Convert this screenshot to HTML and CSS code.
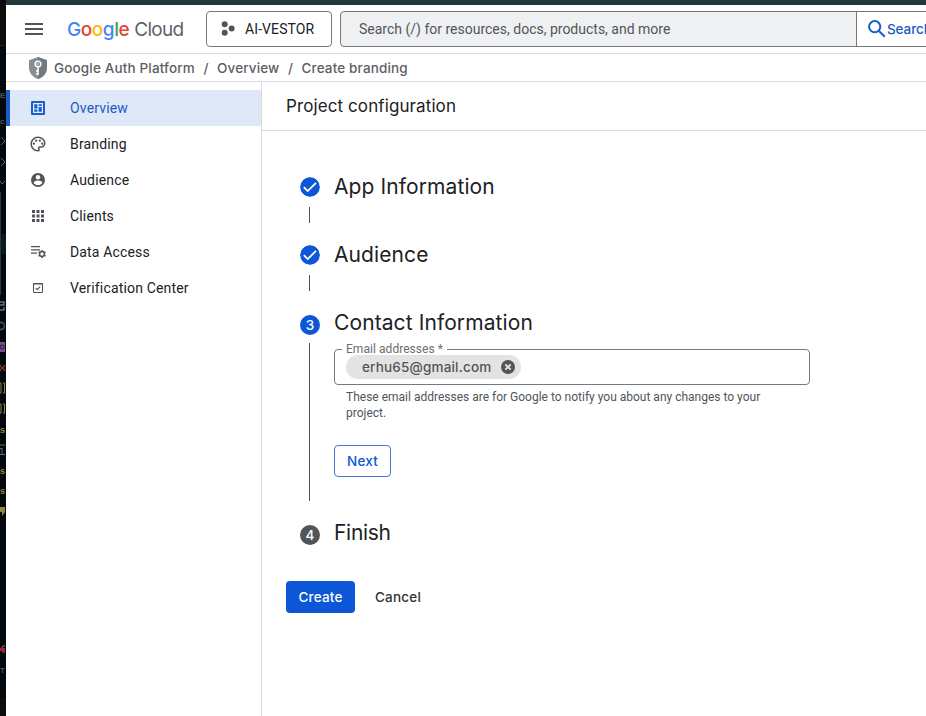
FILE: index.html
```html
<!DOCTYPE html>
<html lang="en">
<head>
<meta charset="utf-8">
<title>Create branding – Google Auth Platform</title>
<link rel="stylesheet" href="styles.css">
</head>
<body>
<div class="screen">
  <svg class="backdrop" width="6" height="716" viewBox="0 0 6 716" aria-hidden="true">
    <path fill="#0c0c0c" d="M0 0h6v45H0z"/>
    <path fill="#20252a" d="M0 45h5v1H0z"/>
    <path fill="#071a25" d="M0 234h6v20H0z"/>
    <path fill="#30353a" d="M0 192h1v103H0z"/>
    <g class="dim-text">
      <text x="0" y="98">E</text><text x="0" y="124">c</text>
      <text x="0" y="673">T</text>
    </g>
    <path fill="none" stroke="#59616a" d="M1 137l4 4-4 4M1 158l4 4-4 4M0 181l2 3 3-3"/>
    <path fill="none" stroke="#687071" stroke-width="1.500" d="M0 302h4v3H0M0 310h4v-3"/>
    <circle cx="1" cy="326" r="3.500" fill="none" stroke="#4a555c" stroke-width="1.500"/>
    <path fill="#7b4a8f" d="M0 342h5v10H0z"/><circle cx="2" cy="347" r="2" fill="none" stroke="#251730"/>
    <path fill="none" stroke="#8a3e1d" stroke-width="1.300" d="M0 365l2 3-2 3M5 365l-2 3 2 3"/>
    <path fill="none" stroke="#89883c" d="M0 383h1v10H0M3 383h1.500v10H3M0 404h1v9H0M3 404h1.500v9H3"/>
    <g class="file-text"><text x="0" y="433">s</text><text x="0" y="474">s</text><text x="0" y="494">s</text></g>
    <path fill="none" stroke="#51717f" d="M0 445h5M2 448v6M0 454.500h5M0 448.500h2"/>
    <path fill="#89883c" d="M0 507h5v5l-3 4v-4H0z"/>
    <path fill="none" stroke="#50565a" stroke-width="1.500" d="M5 646H3l-1 2v2l1 2h2"/>
    <path fill="#c4122f" d="M0 648h5v3H0z"/>
    <path fill="#0c0c0c" d="M0 698h6v18H0z"/>
  </svg>
  <div class="window">
    <header class="topbar">
      <svg class="menu" width="18" height="12" viewBox="0 0 18 12"><path fill="#50555a" d="M0 0h18v2H0zM0 5h18v2H0zM0 10h18v2H0z"/></svg>
      <div class="brand"><span class="google"><b class="g-blue">G</b><b class="g-red">o</b><b class="g-yellow">o</b><b class="g-blue">g</b><b class="g-green">l</b><b class="g-red">e</b></span><span class="cloud">Cloud</span></div>
      <button class="project">
        <svg width="14" height="16" viewBox="0 0 14 16" fill="#50555a"><circle cx="3.700" cy="3.300" r="3"/><circle cx="10.600" cy="7.600" r="3"/><circle cx="3.700" cy="11.700" r="3"/></svg>
        <span>AI-VESTOR</span>
      </button>
      <div class="search">
        <span class="search-hint">Search (/) for resources, docs, products, and more</span>
        <button class="search-button">
          <svg width="18" height="18" viewBox="0 0 18 18" fill="none" stroke="#1a5cc8" stroke-width="2"><circle cx="6.700" cy="6.700" r="5.600"/><path d="M10.800 10.800l6 6"/></svg>
          <span>Search</span>
        </button>
      </div>
    </header>
    <nav class="crumbs">
      <svg width="18" height="22" viewBox="0 0 18 22"><path fill="#878f95" d="M9 0l9 3.300v7.200c0 5.400-3.700 9.800-9 11.500-5.300-1.700-9-6.100-9-11.500V3.300z"/><path fill="#737b82" d="M9 0l9 3.300v7.200c0 5.400-3.700 9.800-9 11.500z"/><circle cx="9" cy="7" r="2.800" fill="none" stroke="#fff" stroke-width="1.500"/><circle cx="9" cy="7" r=".8" fill="#fff"/><path fill="#fff" d="M8.300 9.500h1.500V18H7.200v-2h1.100v-1H7.200v-2h1.100z"/></svg>
      <span>Google Auth Platform</span><i>/</i><span>Overview</span><i>/</i><span>Create branding</span>
    </nav>
    <div class="body">
      <aside class="sidebar">
        <a class="item active"><svg width="18" height="18" viewBox="0 0 18 18"><rect x="2" y="2" width="14" height="14" rx="1.300" fill="#1a5cc8"/><path fill="none" stroke="#e6eefb" stroke-width="1.200" d="M4.600 4.600h8.800v8.800H4.600zM9 4.500v9M4.500 10H9M9 7.500h4.500"/></svg><span>Overview</span></a>
        <a class="item"><svg width="18" height="18" viewBox="0 0 24 24" fill="#50555a"><path d="M12 22C6.490 22 2 17.510 2 12S6.490 2 12 2s10 4.040 10 9c0 3.310-2.690 6-6 6h-1.770c-.280 0-.500.220-.500.500 0 .120.050.230.130.330.410.470.640 1.060.640 1.670A2.500 2.500 0 0 1 12 22zm0-18c-4.410 0-8 3.590-8 8s3.590 8 8 8c.280 0 .500-.220.500-.500a.54.54 0 0 0-.140-.350c-.410-.460-.630-1.050-.630-1.650a2.500 2.500 0 0 1 2.500-2.500H16c2.210 0 4-1.790 4-4 0-3.860-3.590-7-8-7z"/><circle cx="6.500" cy="11.500" r="1.500"/><circle cx="9.500" cy="7.500" r="1.500"/><circle cx="14.500" cy="7.500" r="1.500"/><circle cx="17.500" cy="11.500" r="1.500"/></svg><span>Branding</span></a>
        <a class="item"><svg width="18" height="18" viewBox="0 0 18 18"><circle cx="9" cy="9" r="7" fill="#50555a"/><circle cx="9" cy="6.300" r="2.200" fill="#fff"/><path fill="#fff" d="M4.700 12c0-1.600 2.500-2.400 4.300-2.400s4.300.8 4.300 2.400C12.400 13.400 10.800 14.200 9 14.200S5.600 13.400 4.700 12z"/></svg><span>Audience</span></a>
        <a class="item"><svg width="18" height="18" viewBox="0 0 18 18" fill="#50555a"><path d="M3 3h3v3H3zM7.500 3h3v3h-3zM12 3h3v3h-3zM3 7.500h3v3H3zM7.500 7.500h3v3h-3zM12 7.500h3v3h-3zM3 12h3v3H3zM7.500 12h3v3h-3zM12 12h3v3h-3z"/></svg><span>Clients</span></a>
        <a class="item"><svg width="18" height="18" viewBox="0 0 18 18"><path fill="#50555a" d="M2 3h9v1.300H2zM2 6.200h9v1.300H2zM2 9.400h6v1.300H2z"/><circle cx="13" cy="11" r="2.400" fill="none" stroke="#50555a" stroke-width="1.500"/><path fill="none" stroke="#50555a" stroke-width="1.500" d="M13 6.900v1.500M13 13.600v1.500M9.450 8.950l1.300.75M15.250 12.300l1.300.75M9.450 13.050l1.300-.75M15.250 9.700l1.300-.75"/></svg><span>Data Access</span></a>
        <a class="item"><svg width="18" height="18" viewBox="0 0 18 18" fill="none" stroke="#50555a"><rect x="4.500" y="4.500" width="9" height="9" rx=".7" stroke-width="1.100"/><path stroke-width="1.200" d="M4 5h10M6.700 9.200l1.500 1.500 3-3.100"/></svg><span>Verification Center</span></a>
      </aside>
      <main>
        <h1>Project configuration</h1>
        <ol class="stepper">
          <li class="step">
            <div class="rail"><svg class="dot" viewBox="0 0 20 20"><circle cx="10" cy="10" r="10" fill="#0b57d8"/><path fill="none" stroke="#fff" stroke-width="1.800" d="M3.800 10.200l3.900 3.900 8.300-8.300"/></svg><div class="line"></div></div>
            <h2>App Information</h2>
          </li>
          <li class="step">
            <div class="rail"><svg class="dot" viewBox="0 0 20 20"><circle cx="10" cy="10" r="10" fill="#0b57d8"/><path fill="none" stroke="#fff" stroke-width="1.800" d="M3.800 10.200l3.900 3.900 8.300-8.300"/></svg><div class="line"></div></div>
            <h2>Audience</h2>
          </li>
          <li class="step current">
            <div class="rail"><div class="dot number">3</div><div class="line"></div></div>
            <div>
              <h2>Contact Information</h2>
              <fieldset class="field">
                <legend>Email addresses *</legend>
                <div class="chip"><span>erhu65@gmail.com</span><svg width="14" height="14" viewBox="0 0 14 14"><circle cx="7" cy="7" r="7" fill="#50555a"/><path stroke="#e3e3e3" stroke-width="1.900" d="M4.300 4.300l5.400 5.400M9.700 4.300l-5.400 5.400"/></svg></div>
              </fieldset>
              <p class="help">These email addresses are for Google to notify you about any changes to your project.</p>
              <button class="btn next"><span>Next</span></button>
            </div>
          </li>
          <li class="step last">
            <div class="rail"><div class="dot number">4</div></div>
            <h2>Finish</h2>
          </li>
        </ol>
        <div class="actions"><button class="btn create"><span>Create</span></button><button class="btn cancel"><span>Cancel</span></button></div>
      </main>
    </div>
  </div>
</div>
</body>
</html>
```
FILE: styles.css
```css
* { box-sizing: border-box; }
body { margin: 0; font-family: Roboto, "Liberation Sans", sans-serif; color: #202124; overflow: hidden; }
button { font: inherit; padding: 0; background: none; border: 0; }
svg { flex: none; display: block; }
.screen { display: flex; width: 926px; height: 716px; background: #24373b; overflow: hidden; }
.backdrop { background: #03080d; }
.dim-text { font: bold 8px "Liberation Sans", sans-serif; fill: #50565a; }
.file-text { font: bold 9px "Liberation Sans", sans-serif; fill: #89883c; }
.window { flex: 1; min-width: 0; margin-top: 5px; background: #fff; display: flex; flex-direction: column; }

.topbar { height: 49px; flex: none; display: flex; align-items: center; border-bottom: 1px solid #dadce0; padding-left: 19px; }
.menu { margin-right: 23px; }
.brand { flex: none; width: 139px; display: flex; align-items: center; gap: 5px; font: 19px/24px Inter, sans-serif; letter-spacing: -0.5px; padding: 2px 0 0 1px; }
.google { letter-spacing: -0.45px; }
.google b { font-weight: 500; }
.g-blue { color: #4285f4; }
.g-red { color: #ea4335; }
.g-yellow { color: #fbbc04; }
.g-green { color: #34a853; }
.cloud { color: #5f6368; letter-spacing: -0.7px; }
.project { flex: none; width: 126px; height: 36px; margin-left: 1px; border: 1px solid #747980; border-radius: 4px; display: flex; align-items: center; gap: 10px; padding-left: 14px; font-size: 14px; letter-spacing: 0.1px; color: #202124; }
.search { flex: none; width: 610px; height: 36px; margin-left: 8px; display: flex; align-items: center; border: 1px solid #747980; border-radius: 4px; background: #eff0f2; }
.search-hint { flex: none; width: 515px; padding-left: 18px; font-size: 14px; color: #50555a; white-space: nowrap; }
.search-button { flex: 1; height: 34px; border-left: 1px solid #747980; background: #fff; display: flex; align-items: center; gap: 1px; padding-left: 11px; color: #1a5cc8; font: 500 13.5px Inter, sans-serif; letter-spacing: -0.1px; }

.crumbs { height: 28px; flex: none; display: flex; align-items: center; border-bottom: 1px solid #dadce0; padding-left: 23px; font: 500 13.5px Inter, sans-serif; letter-spacing: 0.15px; color: #5b6065; }
.crumbs svg { margin-right: 7px; }
.crumbs i { font-style: normal; width: 22px; text-align: center; }

.body { flex: 1; display: flex; min-height: 0; }
.sidebar { width: 256px; border-right: 1px solid #dadce0; padding-top: 8px; }
.item { height: 36px; display: flex; align-items: center; gap: 23px; padding-left: 23px; font-size: 14px; letter-spacing: 0.16px; }
.item.active { background: #dfe8f7; color: #1a5cc8; border-left: 4px solid #1a5cc8; padding-left: 19px; }

main { flex: 1; }
h1, h2, p, ol { margin: 0; padding: 0; font-weight: 400; }
h1 { height: 49px; display: flex; align-items: center; border-bottom: 1px solid #dadce0; padding-left: 24px; font: 17px Inter, sans-serif; letter-spacing: 0.1px; }
.stepper { list-style: none; padding: 46px 0 0 38px; }
.step { height: 68px; display: grid; grid-template-columns: 20px 476px; column-gap: 14px; }
.step.current { height: 210px; }
.step.last { height: 22px; }
.rail { display: flex; flex-direction: column; align-items: center; }
.dot { width: 20px; height: 20px; border-radius: 50%; }
.number { margin-top: 2px; background: #0b57d8; color: #fff; text-align: center; font: 500 13.5px/20px Inter, sans-serif; }
.last .number { background: #50555a; }
.line { width: 1px; height: 16px; margin: 10px 1px 0 0; background: #50555a; }
.current .line { height: 158px; margin-top: 8px; }
h2 { font: 21px/20px Inter, sans-serif; letter-spacing: 0.1px; white-space: nowrap; }
.last h2 { letter-spacing: -0.3px; }
.field { height: 42px; margin: 10px 0 0; padding: 0 0 0 4px; border: 1px solid #747980; border-radius: 4px; }
legend { height: 13px; margin-left: 3px; padding: 0 4px; font-size: 12px; line-height: 13px; color: #696e74; letter-spacing: 0.05px; }
.chip { width: 175px; height: 24px; margin: -1px 0 0 7px; padding: 0 6px 0 16px; border-radius: 12px; background: #e3e3e3; display: flex; align-items: center; justify-content: space-between; font: 500 13.5px Inter, sans-serif; letter-spacing: 0.18px; color: #50555a; }
.help { padding-left: 12px; margin-top: 4px; width: 440px; font-size: 12px; line-height: 16px; color: #50555a; }
.btn { height: 32px; border-radius: 4px; font: 500 13.5px Inter, sans-serif; letter-spacing: 0.2px; display: flex; align-items: center; justify-content: center; }
.next { width: 57px; margin-top: 24px; border: 1px solid #4478ce; color: #0b57d8; }
.actions { display: flex; gap: 20px; margin: 36px 0 0 24px; }
.create { width: 69px; background: #0b57d8; color: #fff; }
.cancel { color: #303438; }
```
